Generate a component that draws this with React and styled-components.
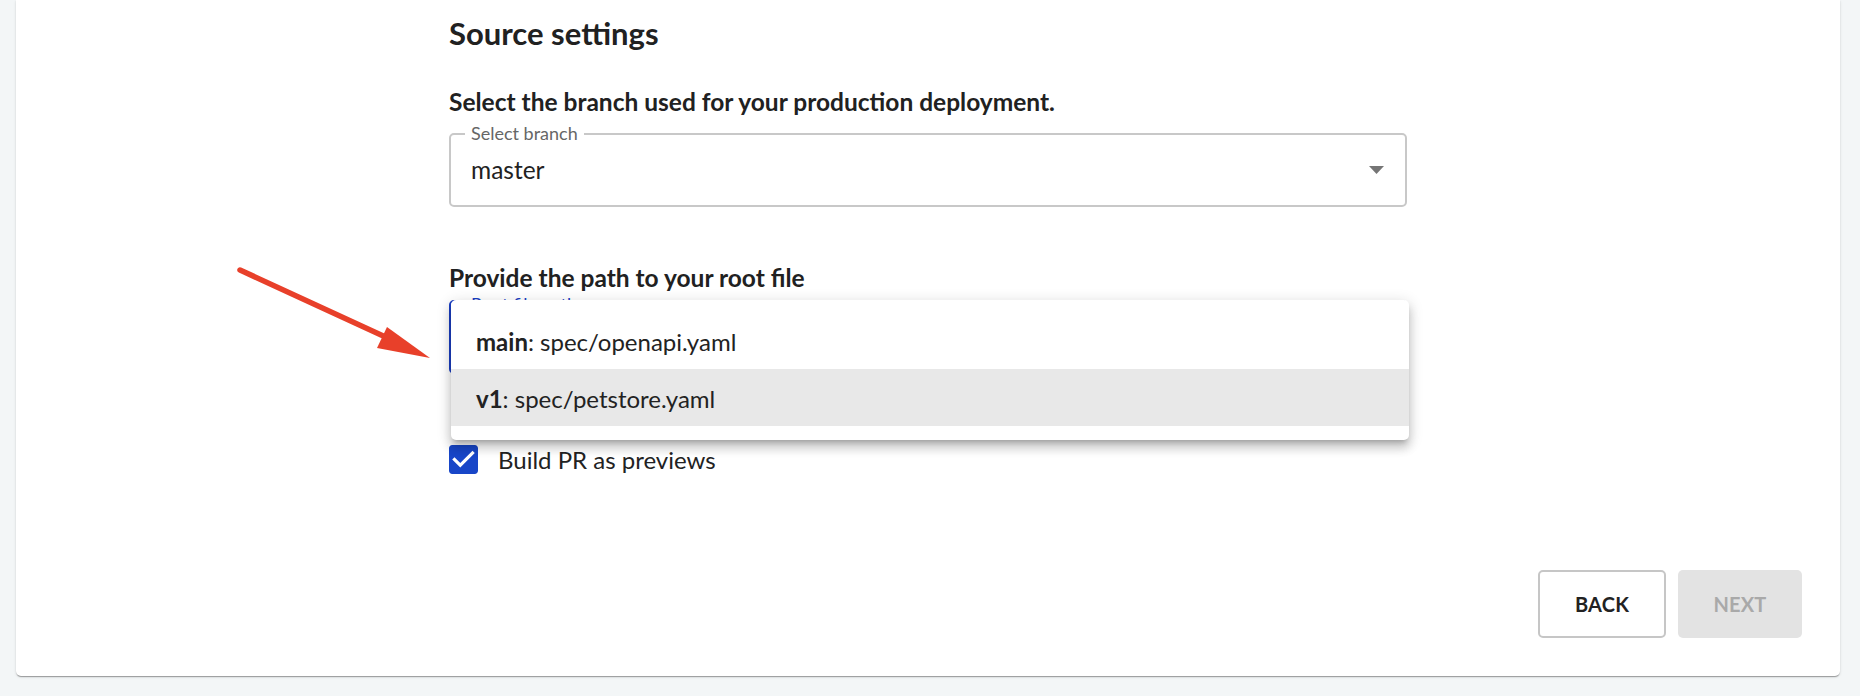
import React from 'react'
import styled, { createGlobalStyle } from 'styled-components'

const GlobalStyle = createGlobalStyle`
  html, body {
    margin: 0;
    padding: 0;
    background: #f3f6f7;
    overflow: hidden;
  }
  body {
    font-family: Lato, "Noto Sans", sans-serif;
    color: #212121;
  }
`

const Page = styled.div`
  position: relative;
  height: 696px;
  box-sizing: border-box;
  padding: 0 20px 20px 16px;
  display: flex;
  flex-direction: column;
`

const Card = styled.div`
  flex: 1;
  background: #fff;
  border-radius: 0 0 5px 5px;
  box-shadow: 0 2px 1px -1px rgba(0, 0, 0, 0.2), 0 1px 1px 0 rgba(0, 0, 0, 0.14),
    0 1px 3px 0 rgba(0, 0, 0, 0.12);
  padding: 15px 38px 38px;
  display: flex;
  flex-direction: column;
`

const Column = styled.div`
  width: 958px;
  margin: 0 auto;
  flex: 1;
  display: flex;
  flex-direction: column;
`

const Heading = styled.h2`
  margin: 0;
  font-size: 31px;
  line-height: 1.2;
  font-weight: 700;
`

const SubHeading = styled.h3`
  margin: ${p => p.$top}px 0 0;
  font-size: 24.5px;
  line-height: 1.2;
  font-weight: 700;
`

const Field = styled.div`
  position: relative;
  margin-top: ${p => p.$top}px;
  height: 74px;
  box-sizing: border-box;
  border: 2px solid ${p => (p.$focused ? '#1b3fc4' : '#c8c8c8')};
  border-radius: 5px;
  display: flex;
  align-items: center;
  padding: 0 21px 0 20px;
`

const FieldLabel = styled.span`
  position: absolute;
  top: ${p => (p.$focused ? -8 : -12)}px;
  left: 14px;
  padding: 0 6px;
  background: #fff;
  font-size: 18px;
  line-height: 20px;
  color: ${p => (p.$focused ? '#1b3fc4' : '#666')};
`

const Value = styled.span`
  flex: 1;
  font-size: 24.5px;
  line-height: 1.2;
  color: #222;
`

const Menu = styled.ul`
  position: absolute;
  top: -2px;
  left: 0;
  right: -4px;
  z-index: 2;
  margin: 0;
  padding: 12px 0 14px;
  list-style: none;
  background: #fff;
  border-radius: 5px;
  box-shadow: 0 5px 5px -3px rgba(0, 0, 0, 0.2), 0 8px 10px 1px rgba(0, 0, 0, 0.14),
    0 3px 14px 2px rgba(0, 0, 0, 0.12);
`

const MenuItem = styled.li`
  height: 57px;
  box-sizing: border-box;
  padding: 3px 25px 0;
  display: flex;
  align-items: center;
  font-size: 24px;
  line-height: 1.2;
  color: #222;
  background: ${p => (p.$active ? '#e8e8e8' : 'transparent')};
  white-space: pre;
  b {
    font-weight: 700;
  }
`

const CheckRow = styled.label`
  margin-top: 71px;
  display: flex;
  align-items: center;
  gap: 20px;
  height: 29px;
  font-size: 24px;
  line-height: 29px;
  color: #222;
`

const Actions = styled.div`
  display: flex;
  justify-content: flex-end;
  gap: 12px;
`

const Button = styled.button`
  width: ${p => p.$w}px;
  height: 68px;
  box-sizing: border-box;
  border-radius: 5px;
  border: ${p => (p.$disabled ? 'none' : '2px solid #c6c6c6')};
  background: ${p => (p.$disabled ? '#e3e3e3' : '#fff')};
  color: ${p => (p.$disabled ? '#a9a9a9' : '#222')};
  font-family: inherit;
  font-size: 20px;
  font-weight: 700;
  letter-spacing: 0.2px;
  text-transform: uppercase;
`

const Annotation = styled.svg`
  position: absolute;
  left: 0;
  top: 0;
  pointer-events: none;
  z-index: 5;
`

const CheckIcon = () => (
  <svg width="29" height="29" viewBox="3 3 18 18">
    <path
      d="M19 3H5c-1.11 0-2 .9-2 2v14c0 1.1.89 2 2 2h14c1.11 0 2-.9 2-2V5c0-1.1-.89-2-2-2zm-9 14l-5-5 1.41-1.41L10 14.17l7.59-7.59L19 8l-9 9z"
      fill="#1846c8"
    />
  </svg>
)

const DropArrow = () => (
  <svg width="15" height="8" viewBox="0 0 15 8">
    <path d="M0 0h15L7.5 8z" fill="#757575" />
  </svg>
)

export default function App() {
  return (
    <>
      <GlobalStyle />
      <Page>
        <Card>
          <Column>
            <Heading>Source settings</Heading>
            <SubHeading $top={35}>Select the branch used for your production deployment.</SubHeading>
            <Field $top={16}>
              <FieldLabel>Select branch</FieldLabel>
              <Value>master</Value>
              <DropArrow />
            </Field>
            <SubHeading $top={56}>Provide the path to your root file</SubHeading>
            <Field $top={8} $focused>
              <FieldLabel $focused>Root file path</FieldLabel>
              <Menu>
                <MenuItem>
                  <b>main</b>: spec/openapi.yaml
                </MenuItem>
                <MenuItem $active>
                  <b>v1</b>: spec/petstore.yaml
                </MenuItem>
              </Menu>
            </Field>
            <CheckRow>
              <CheckIcon />
              Build PR as previews
            </CheckRow>
          </Column>
          <Actions>
            <Button $w={128}>Back</Button>
            <Button $w={124} $disabled>
              Next
            </Button>
          </Actions>
        </Card>
        <Annotation width="1860" height="696">
          <line x1="240" y1="270" x2="392" y2="340" stroke="#e8402a" strokeWidth="5.5" strokeLinecap="round" />
          <polygon points="430,358 387,327 377,348" fill="#e8402a" />
        </Annotation>
      </Page>
    </>
  )
}
